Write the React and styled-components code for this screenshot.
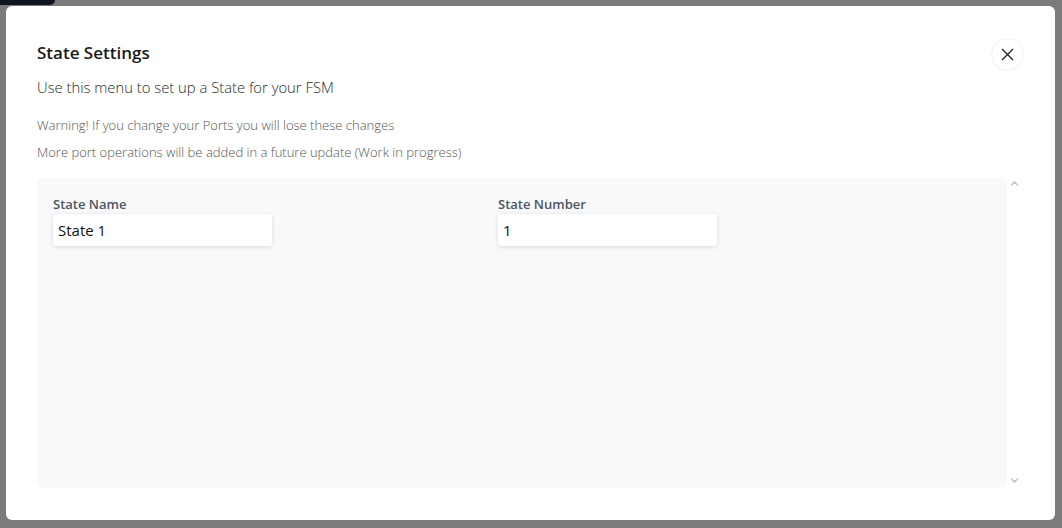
import React from 'react';
import styled, { createGlobalStyle } from 'styled-components';

const GlobalStyle = createGlobalStyle`
	html, body {
		margin: 0;
		padding: 0;
		height: 100%;
	}
	body {
		font-family: 'Open Sans', 'Noto Sans', sans-serif;
		background: #7b7b7b;
	}
`;

const Backdrop = styled.div`
	position: relative;
	width: 1062px;
	height: 528px;
	background: #7b7b7b;
	padding: 6px 7px 8px 6px;
	box-sizing: border-box;
`;

const Behind = styled.div`
	position: absolute;
	top: 0;
	left: 0;
	width: 55px;
	height: 5px;
	background: #0f1420;
	border-bottom-right-radius: 5px;
`;

const Modal = styled.div`
	position: relative;
	height: 100%;
	background: #ffffff;
	border-radius: 6px;
	padding: 35px 33px 32px 31px;
	box-sizing: border-box;
	display: flex;
	flex-direction: column;
`;

const Header = styled.div`
	display: flex;
	justify-content: space-between;
	align-items: flex-start;
`;

const Title = styled.h2`
	margin: 0;
	font-size: 17px;
	font-weight: 600;
	color: #1a1a1a;
	line-height: 24px;
`;

const CloseButton = styled.button`
	width: 33px;
	height: 33px;
	border-radius: 50%;
	border: 1.5px solid #efefef;
	background: #fff;
	display: flex;
	align-items: center;
	justify-content: center;
	padding: 0;
	margin-top: -3px;
	margin-right: -2px;
	cursor: pointer;
`;

const Subtitle = styled.p`
	margin: 5px 0 0;
	font-size: 14.8px;
	font-weight: 300;
	color: #2a2a2a;
	line-height: 22px;
`;

const Note = styled.p`
	margin: ${({ $first }) => ($first ? '16px' : '5px')} 0 0;
	font-size: 13px;
	font-weight: 300;
	color: #555;
	line-height: 22px;
`;

const Body = styled.div`
	flex: 1;
	display: flex;
	margin-top: 15px;
`;

const Panel = styled.div`
	flex: 1;
	background: #f8f9fa;
	border-radius: 6px;
	padding: 16px 16px;
	display: grid;
	grid-template-columns: 445px 1fr;
	align-content: start;
`;

const Field = styled.div`
	display: flex;
	flex-direction: column;
`;

const Label = styled.label`
	font-size: 13px;
	font-weight: 600;
	color: #4d5463;
	line-height: 20px;
`;

const Input = styled.input`
	width: 219px;
	height: 32px;
	box-sizing: border-box;
	border: none;
	border-radius: 3px;
	background: #ffffff;
	box-shadow: 0 1px 4px rgba(0, 0, 0, 0.13);
	padding: 0 5px;
	font-family: 'Open Sans', 'Noto Sans', sans-serif;
	font-size: 15px;
	color: #111;
	outline: none;
`;

const Scrollbar = styled.div`
	width: 15px;
	display: flex;
	flex-direction: column;
	justify-content: space-between;
	align-items: center;
	padding: 2px 0 4px;
`;

const Chevron = ({ up }) => (
	<svg width="9" height="6" viewBox="0 0 9 6">
		<path
			d={up ? 'M0.5 5.5 L4.5 1 L8.5 5.5 L7 5.5 L4.5 3 L2 5.5 Z' : 'M0.5 0.5 L4.5 5 L8.5 0.5 L7 0.5 L4.5 3 L2 0.5 Z'}
			fill="#b5b5b5"
		/>
	</svg>
);

const App = () => {
	return (
		<>
			<GlobalStyle />
			<Backdrop>
				<Behind />
				<Modal>
					<Header>
						<Title>State Settings</Title>
						<CloseButton aria-label="Close">
							<svg width="13" height="13" viewBox="0 0 13 13">
								<path d="M1 1 L12 12 M12 1 L1 12" stroke="#222" strokeWidth="1.3" />
							</svg>
						</CloseButton>
					</Header>
					<Subtitle>Use this menu to set up a State for your FSM</Subtitle>
					<Note $first>Warning! If you change your Ports you will lose these changes</Note>
					<Note>More port operations will be added in a future update (Work in progress)</Note>
					<Body>
						<Panel>
							<Field>
								<Label>State Name</Label>
								<Input defaultValue="State 1" />
							</Field>
							<Field>
								<Label>State Number</Label>
								<Input defaultValue="1" />
							</Field>
						</Panel>
						<Scrollbar>
							<Chevron up />
							<Chevron />
						</Scrollbar>
					</Body>
				</Modal>
			</Backdrop>
		</>
	);
};

export default App;
